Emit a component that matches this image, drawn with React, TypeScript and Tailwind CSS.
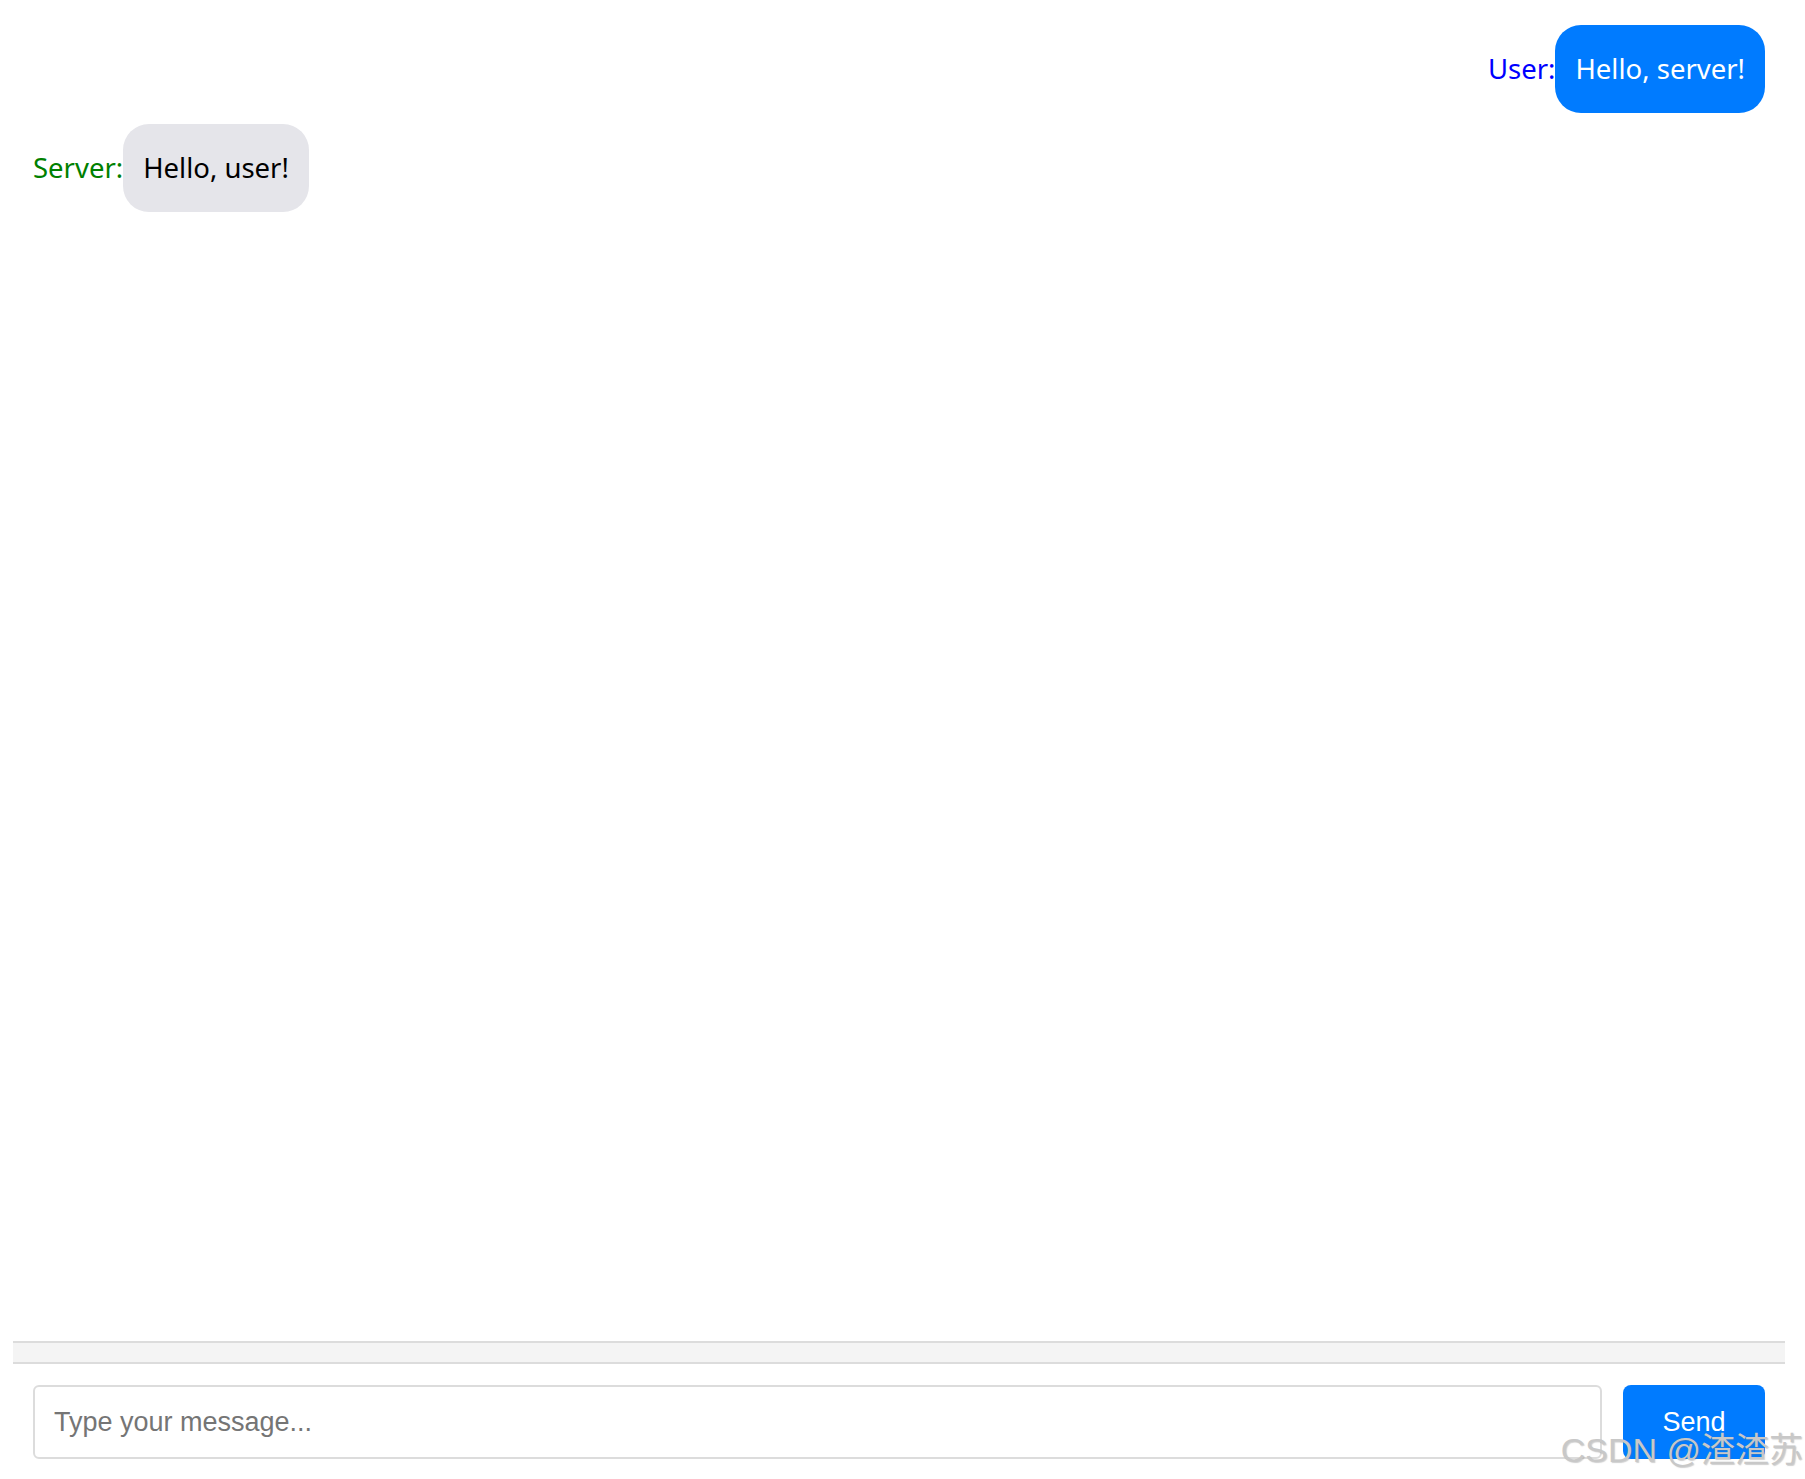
import React from "react";

type Msg = { from: "user" | "server"; text: string };

const messages: Msg[] = [
  { from: "user", text: "Hello, server!" },
  { from: "server", text: "Hello, user!" },
];

function Bubble({ msg }: { msg: Msg }) {
  const isUser = msg.from === "user";
  return (
    <div className={`flex items-center ${isUser ? "justify-end" : "justify-start"}`}>
      <span
        className={`text-[27.5px] ${isUser ? "text-[#0000ff]" : "text-[#008000]"}`}
      >
        {isUser ? "User:" : "Server:"}
      </span>
      <div
        className={`flex h-[88px] items-center rounded-[26px] px-[20px] text-[27.5px] ${
          isUser ? "bg-[#007bff] text-white" : "bg-[#e5e5ea] text-black"
        }`}
      >
        {msg.text}
      </div>
    </div>
  );
}

export default function App() {
  return (
    <div
      className="relative flex h-[1479px] w-full flex-col bg-white pl-[13px] pr-[20px]"
      style={{ fontFamily: '"Noto Sans", "Open Sans", sans-serif' }}
    >
      <div className="flex flex-1 flex-col gap-[11px] px-[20px] pt-[25px]">
        {messages.map((m, i) => (
          <Bubble key={i} msg={m} />
        ))}
      </div>
      <div className="h-[23px] border-y-2 border-[#dcdcdc] bg-[#f4f4f4]" />
      <div
        className="flex gap-[21px] px-[20px] pb-[20px] pt-[21px]"
        style={{ fontFamily: '"Liberation Sans", Arial, sans-serif' }}
      >
        <input
          type="text"
          placeholder="Type your message..."
          className="h-[74px] flex-1 rounded-[6px] border-2 border-[#dcdcdc] px-[19px] text-[27px] text-black outline-none placeholder:text-[#757575]"
        />
        <button className="h-[74px] w-[142px] rounded-[8px] bg-[#007bff] text-[27px] text-white">
          Send
        </button>
      </div>
      <div
        className="pointer-events-none absolute bottom-[12px] right-[2px] text-[34px] leading-none text-[#c8c8c8]"
        style={{
          fontFamily: '"Liberation Sans", "Noto Sans CJK SC", sans-serif',
          textShadow: "1px 1px 1px rgba(120,120,120,0.35)",
        }}
      >
        CSDN @渣渣苏
      </div>
    </div>
  );
}
